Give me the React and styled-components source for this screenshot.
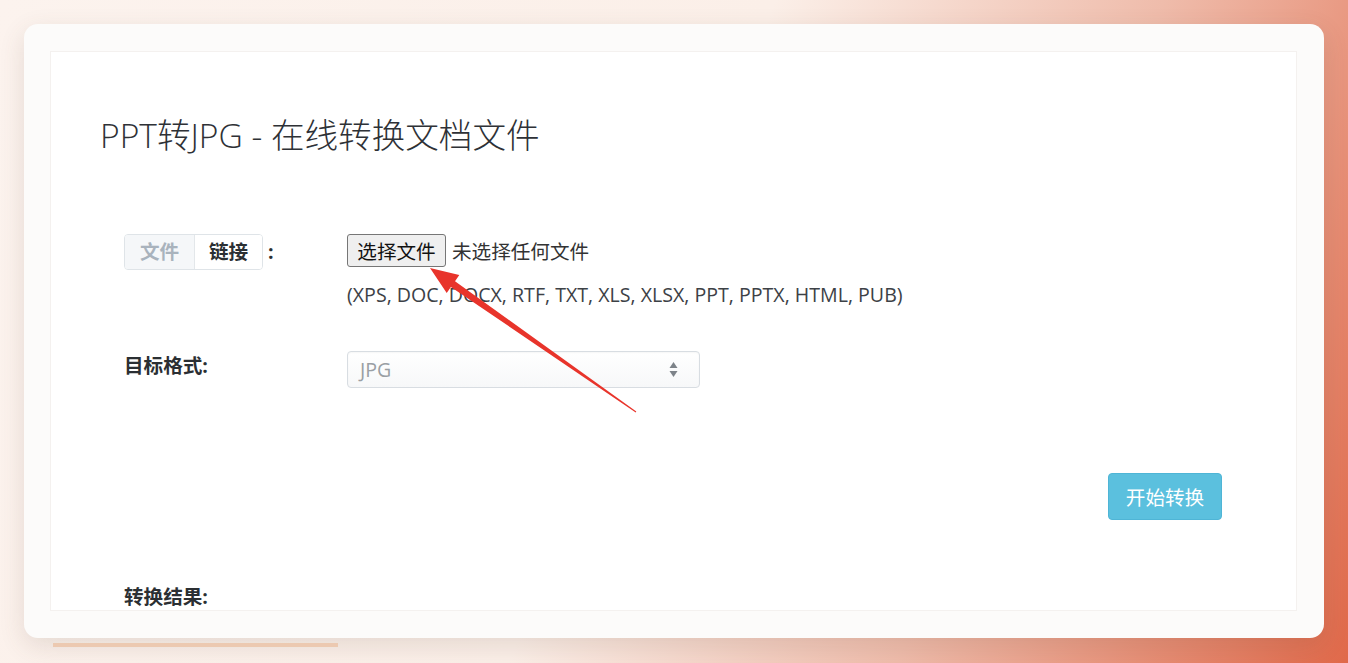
import React from 'react'
import styled, { createGlobalStyle } from 'styled-components'

const GlobalStyle = createGlobalStyle`
    html, body {
        margin: 0;
        padding: 0;
    }
    body {
        font-family: "Open Sans", "Noto Sans CJK SC", sans-serif;
        color: #333;
    }
`

const Stage = styled.div`
    position: relative;
    width: 1348px;
    height: 663px;
    overflow: hidden;
    box-sizing: border-box;
    padding: 24px 24px 0 24px;
    background: linear-gradient(112deg, #fcf3ee 0%, #fbefe8 48%, #efbcab 72%, #e0694a 100%);
`

const Card = styled.div`
    width: 1300px;
    height: 614px;
    box-sizing: border-box;
    padding: 27px 27px 27px 26px;
    border-radius: 14px;
    background: #fcfbfa;
    box-shadow: 0 8px 26px rgba(90, 70, 60, 0.14);
    overflow: hidden;
`

const Panel = styled.div`
    height: 560px;
    box-sizing: border-box;
    border: 1px solid #f4f1ef;
    background: #fff;
    padding: 63px 74px 0 49px;
    overflow: hidden;
`

const Title = styled.h1`
    margin: 0;
    font-size: 33.6px;
    line-height: 40px;
    font-weight: 300;
    color: #2e3136;
`

const Form = styled.div`
    margin-top: 79px;
    padding-left: 24px;
    display: flex;
    flex-direction: column;
`

const Row = styled.div`
    display: grid;
    grid-template-columns: 223px 1fr;
    align-items: start;
    margin-top: ${(p) => p.$gap || 0}px;
`

const Label = styled.div`
    font-size: 19.6px;
    font-weight: 700;
    line-height: 28px;
    padding-top: ${(p) => p.$pad || 0}px;
    color: #2b2f33;
    display: flex;
    align-items: center;
`

const Toggle = styled.div`
    display: flex;
    height: 36px;
    box-sizing: border-box;
    border: 1px solid #dfe4e8;
    border-radius: 4px;
    overflow: hidden;
`

const ToggleItem = styled.div`
    width: ${(p) => p.$w}px;
    display: flex;
    align-items: center;
    justify-content: center;
    font-size: 19.6px;
    font-weight: 700;
    background: ${(p) => (p.$active ? '#f5f7f9' : '#fff')};
    color: ${(p) => (p.$active ? '#a9b3bd' : '#2b2f33')};
    border-right: ${(p) => (p.$active ? '1px solid #e3e7ea' : 'none')};
`

const Colon = styled.span`
    margin-left: 5px;
    font-size: 19.6px;
    font-weight: 700;
`

const FileLine = styled.div`
    display: flex;
    align-items: center;
    height: 35px;
    padding-bottom: 2px;
    box-sizing: border-box;
`

const FileButton = styled.button`
    height: 33px;
    width: 99px;
    padding: 0;
    border: 1px solid #767676;
    border-radius: 3px;
    background: #efefef;
    font-family: "Noto Sans CJK SC", sans-serif;
    font-size: 19.6px;
    line-height: 1;
    color: #111;
`

const FileStatus = styled.span`
    margin-left: 6px;
    font-size: 19.6px;
    color: #333;
`

const Hint = styled.div`
    margin-top: 12px;
    font-size: 19.6px;
    line-height: 28px;
    color: #3d4146;
`

const Select = styled.div`
    width: 353px;
    height: 37px;
    box-sizing: border-box;
    border: 1px solid #d8dde2;
    border-radius: 4px;
    background: linear-gradient(#ffffff, #f7f8f9);
    box-shadow: inset 0 1px 2px rgba(0, 0, 0, 0.04);
    display: flex;
    align-items: center;
    justify-content: space-between;
    padding: 0 21px 0 12px;
    font-size: 19.6px;
    color: #9a9fa4;
`

const ButtonRow = styled.div`
    display: flex;
    justify-content: flex-end;
    margin-top: 85px;
`

const StartButton = styled.button`
    width: 114px;
    height: 47px;
    border: 1px solid #4fb5d6;
    border-radius: 4px;
    background: #5bc0de;
    color: #fff;
    font-family: "Noto Sans CJK SC", sans-serif;
    font-size: 19.6px;
    line-height: 1;
    padding: 0;
`

const Underbar = styled.div`
    width: 285px;
    height: 4px;
    margin: 5px 0 0 29px;
    background: #ecc9b1;
`

const Overlay = styled.svg`
    position: absolute;
    left: 0;
    top: 0;
    pointer-events: none;
`

function Arrows() {
    return (
        <svg width="9" height="17" viewBox="0 0 9 17">
            <path d="M4.5 1 L8.5 7 L0.5 7 Z" fill="#7d8389" />
            <path d="M4.5 16 L8.5 10 L0.5 10 Z" fill="#7d8389" />
        </svg>
    )
}

export default function App() {
    return (
        <Stage>
            <GlobalStyle />
            <Card>
                <Panel>
                    <Title>PPT转JPG - 在线转换文档文件</Title>
                    <Form>
                        <Row>
                            <Label>
                                <Toggle>
                                    <ToggleItem $w={69} $active>文件</ToggleItem>
                                    <ToggleItem $w={67}>链接</ToggleItem>
                                </Toggle>
                                <Colon>:</Colon>
                            </Label>
                            <div>
                                <FileLine>
                                    <FileButton>选择文件</FileButton>
                                    <FileStatus>未选择任何文件</FileStatus>
                                </FileLine>
                                <Hint>(XPS, DOC, DOCX, RTF, TXT, XLS, XLSX, PPT, PPTX, HTML, PUB)</Hint>
                            </div>
                        </Row>
                        <Row $gap={42}>
                            <Label $pad={1}>目标格式:</Label>
                            <Select>
                                <span>JPG</span>
                                <Arrows />
                            </Select>
                        </Row>
                        <ButtonRow>
                            <StartButton>开始转换</StartButton>
                        </ButtonRow>
                        <Row $gap={63}>
                            <Label>转换结果:</Label>
                        </Row>
                    </Form>
                </Panel>
            </Card>
            <Underbar />
            <Overlay width="1348" height="663" viewBox="0 0 1348 663">
                <polygon
                    points="430,268 459.3,275 455,281.2 636.3,411.6 635.7,412.4 450.9,286.9 446.7,293.1"
                    fill="#e8342b"
                />
            </Overlay>
        </Stage>
    )
}
